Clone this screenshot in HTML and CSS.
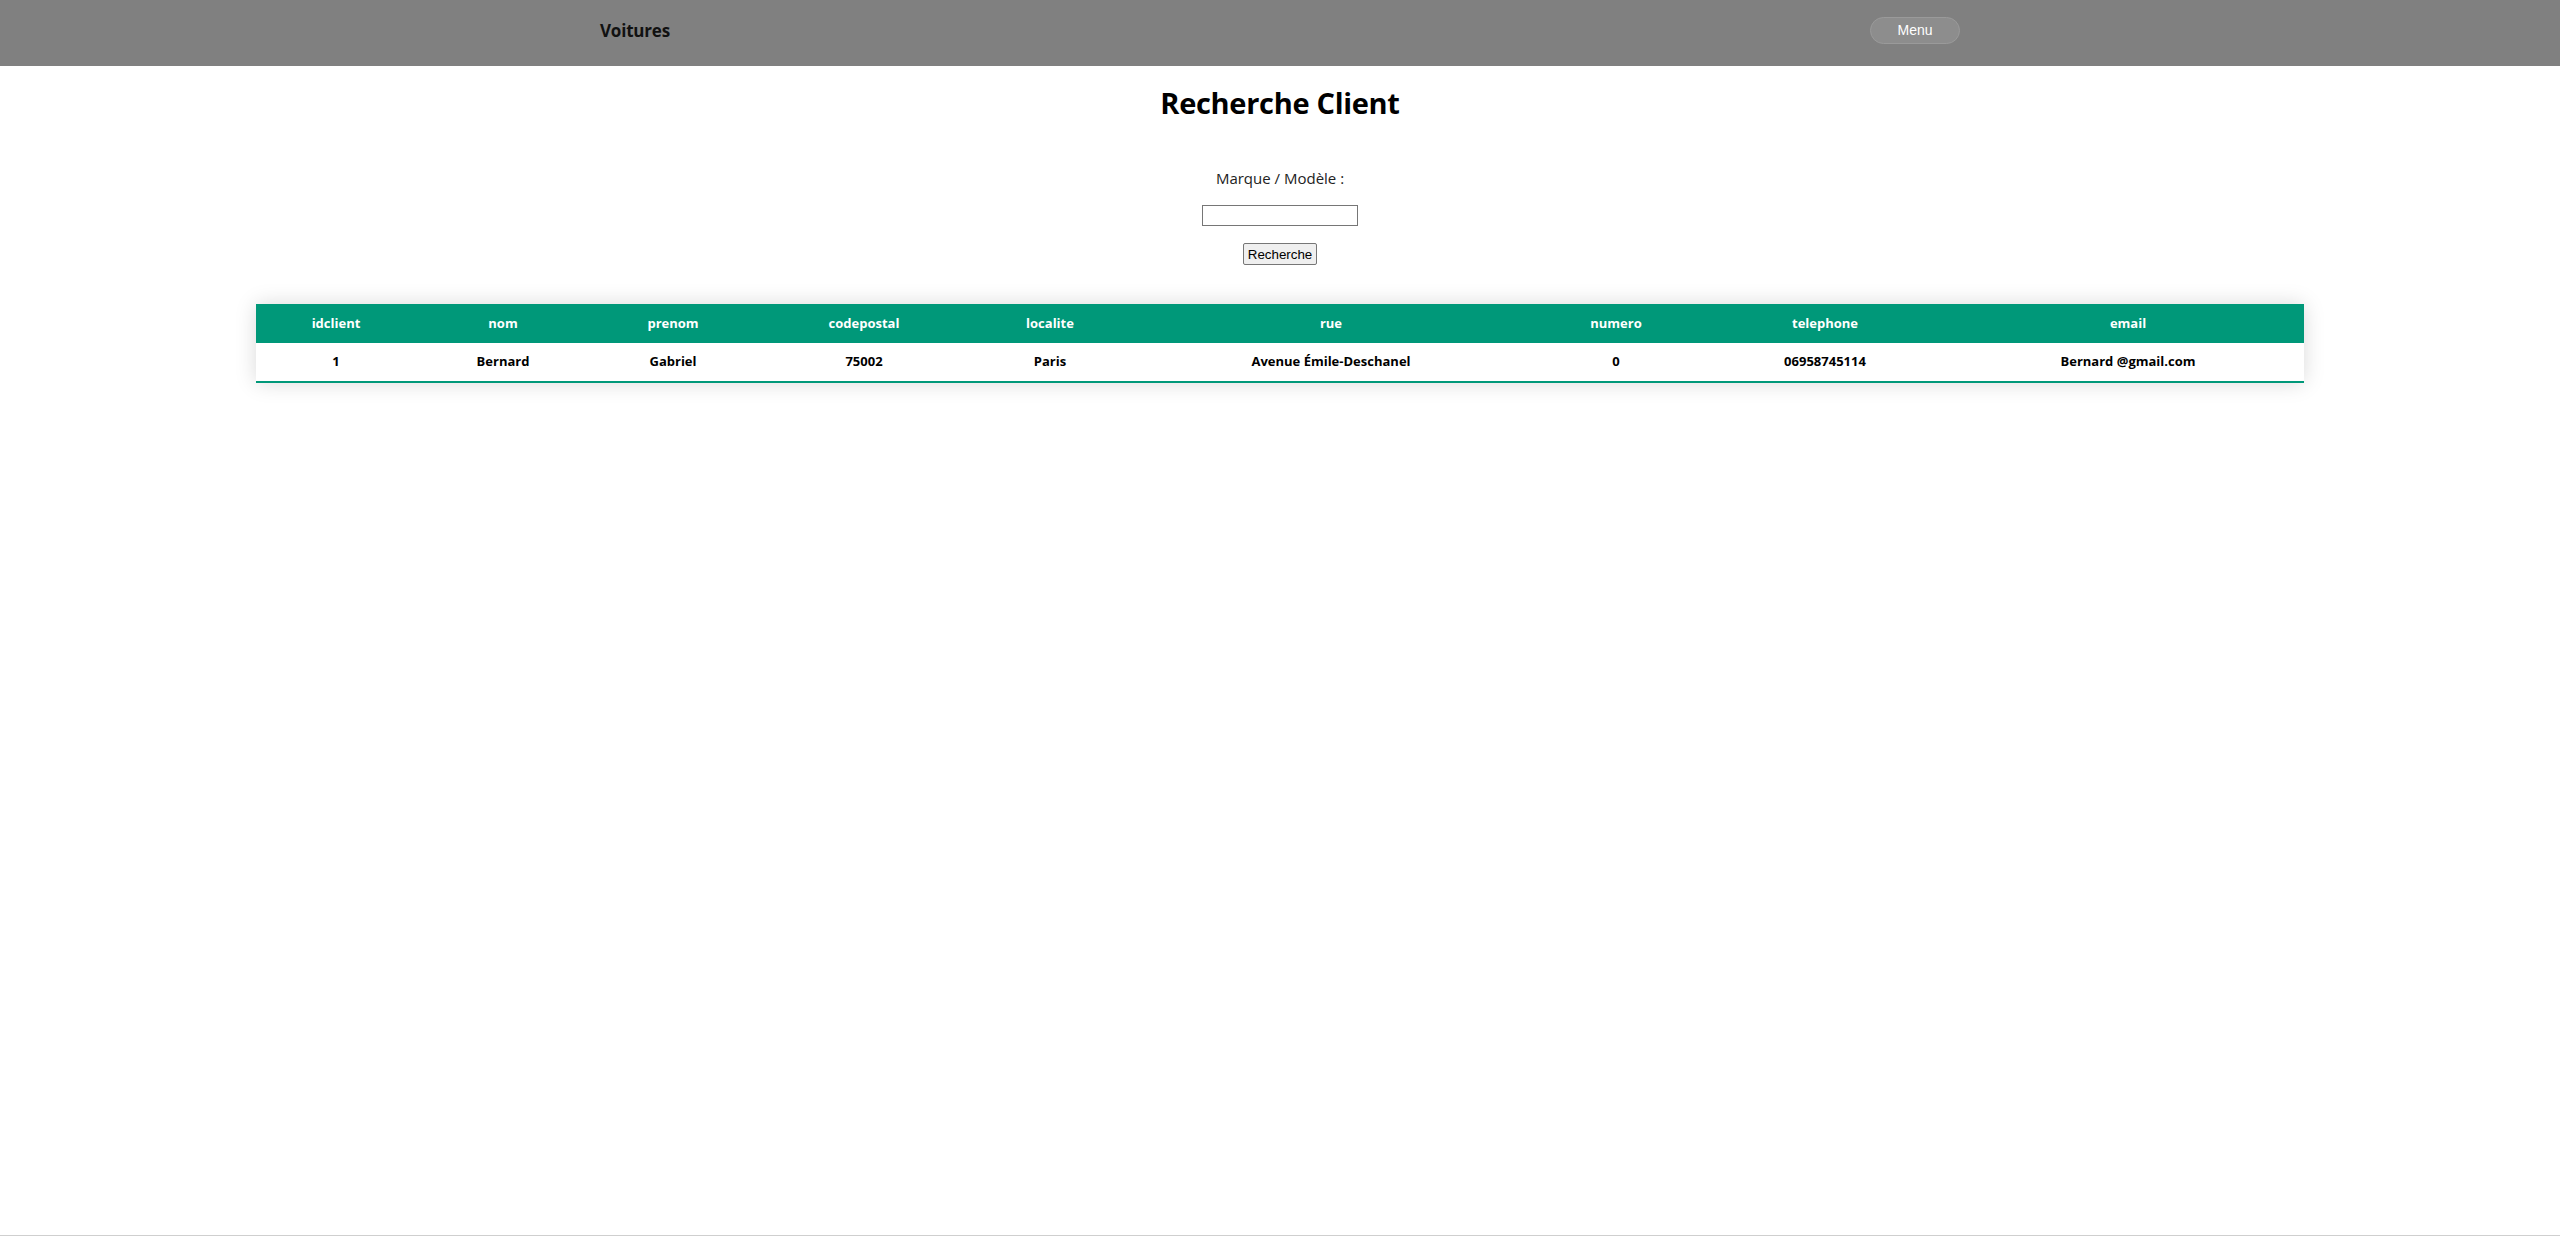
FILE: index.html
```html
<!DOCTYPE html>
<html lang="fr">
<head>
<meta charset="utf-8">
<title>Recherche Client</title>
<link rel="stylesheet" href="styles.css">
</head>
<body>
<header class="topbar">
  <nav class="nav">
    <span class="brand">Voitures</span>
    <button class="menu-btn" type="button">Menu</button>
  </nav>
</header>
<main class="page">
  <h1 class="title">Recherche Client</h1>
  <form class="search">
    <label class="search-label" for="q">Marque / Modèle :</label>
    <input class="search-input" id="q" type="text">
    <button class="search-btn" type="button">Recherche</button>
  </form>
  <table class="styled-table">
    <colgroup>
      <col class="c1"><col class="c2"><col class="c3"><col class="c4"><col class="c5"><col class="c6"><col class="c7"><col class="c8"><col class="c9">
    </colgroup>
    <thead>
      <tr>
        <th>idclient</th><th>nom</th><th>prenom</th><th>codepostal</th><th>localite</th><th>rue</th><th>numero</th><th>telephone</th><th>email</th>
      </tr>
    </thead>
    <tbody>
      <tr>
        <td>1</td><td>Bernard</td><td>Gabriel</td><td>75002</td><td>Paris</td><td>Avenue Émile-Deschanel</td><td>0</td><td>06958745114</td><td>Bernard @gmail.com</td>
      </tr>
    </tbody>
  </table>
</main>
<footer class="footer"></footer>
</body>
</html>
```
FILE: styles.css
```css
html, body {
  margin: 0;
  padding: 0;
  height: 100%;
}
body {
  font-family: "Open Sans", "Noto Sans", sans-serif;
  background: #fff;
  color: #000;
  display: flex;
  flex-direction: column;
}
.topbar {
  background: #808080;
  height: 66px;
  flex: none;
}
.nav {
  height: 100%;
  box-sizing: border-box;
  padding-bottom: 6px;
  display: flex;
  justify-content: space-around;
  align-items: center;
}
.brand {
  font-size: 17px;
  font-weight: 700;
  color: #111;
  letter-spacing: -0.2px;
  width: 70px;
}
.menu-btn {
  width: 90px;
  height: 27px;
  border-radius: 14px;
  border: 1px solid #9a9a9a;
  background: #8d8d8d;
  color: #fff;
  font-family: "Liberation Sans", Arial, sans-serif;
  font-size: 14px;
  padding: 0;
}
.page {
  flex: 1;
  display: flex;
  flex-direction: column;
  align-items: center;
}
.title {
  margin: 16px 0 0;
  font-size: 29px;
  line-height: 42px;
  font-weight: 700;
  letter-spacing: -0.3px;
}
.search {
  margin-top: 43px;
  display: flex;
  flex-direction: column;
  align-items: center;
}
.search-label {
  font-size: 15px;
  line-height: 22px;
  color: #222;
}
.search-input {
  margin-top: 16px;
  width: 150px;
  height: 17px;
  padding: 1px 2px;
  border: 1px solid #767676;
  font-size: 13px;
}
.search-btn {
  margin-top: 17px;
  font-family: "Liberation Sans", Arial, sans-serif;
  font-size: 13.33px;
  padding: 1px 4px;
  height: 22px;
  border: 1px solid #767676;
  border-radius: 2px;
  background: #efefef;
  color: #000;
}
.styled-table {
  margin-top: 39px;
  width: 2048px;
  border-collapse: collapse;
  table-layout: fixed;
  font-size: 13px;
  box-shadow: 0 0 20px rgba(0, 0, 0, 0.15);
}
.c1 { width: 160px; }
.c2 { width: 174px; }
.c3 { width: 166px; }
.c4 { width: 216px; }
.c5 { width: 156px; }
.c6 { width: 406px; }
.c7 { width: 164px; }
.c8 { width: 254px; }
.c9 { width: 352px; }
.styled-table thead tr {
  background: #009879;
  color: #fff;
}
.styled-table th,
.styled-table td {
  padding: 11px 15px;
  font-weight: 700;
  text-align: center;
  line-height: 17px;
}
.styled-table td {
  padding: 10px 15px 11px;
}
.styled-table tbody tr {
  border-bottom: 2px solid #009879;
}
.footer {
  flex: none;
  height: 8px;
  border-top: 1px solid #cfcfcf;
}
```
